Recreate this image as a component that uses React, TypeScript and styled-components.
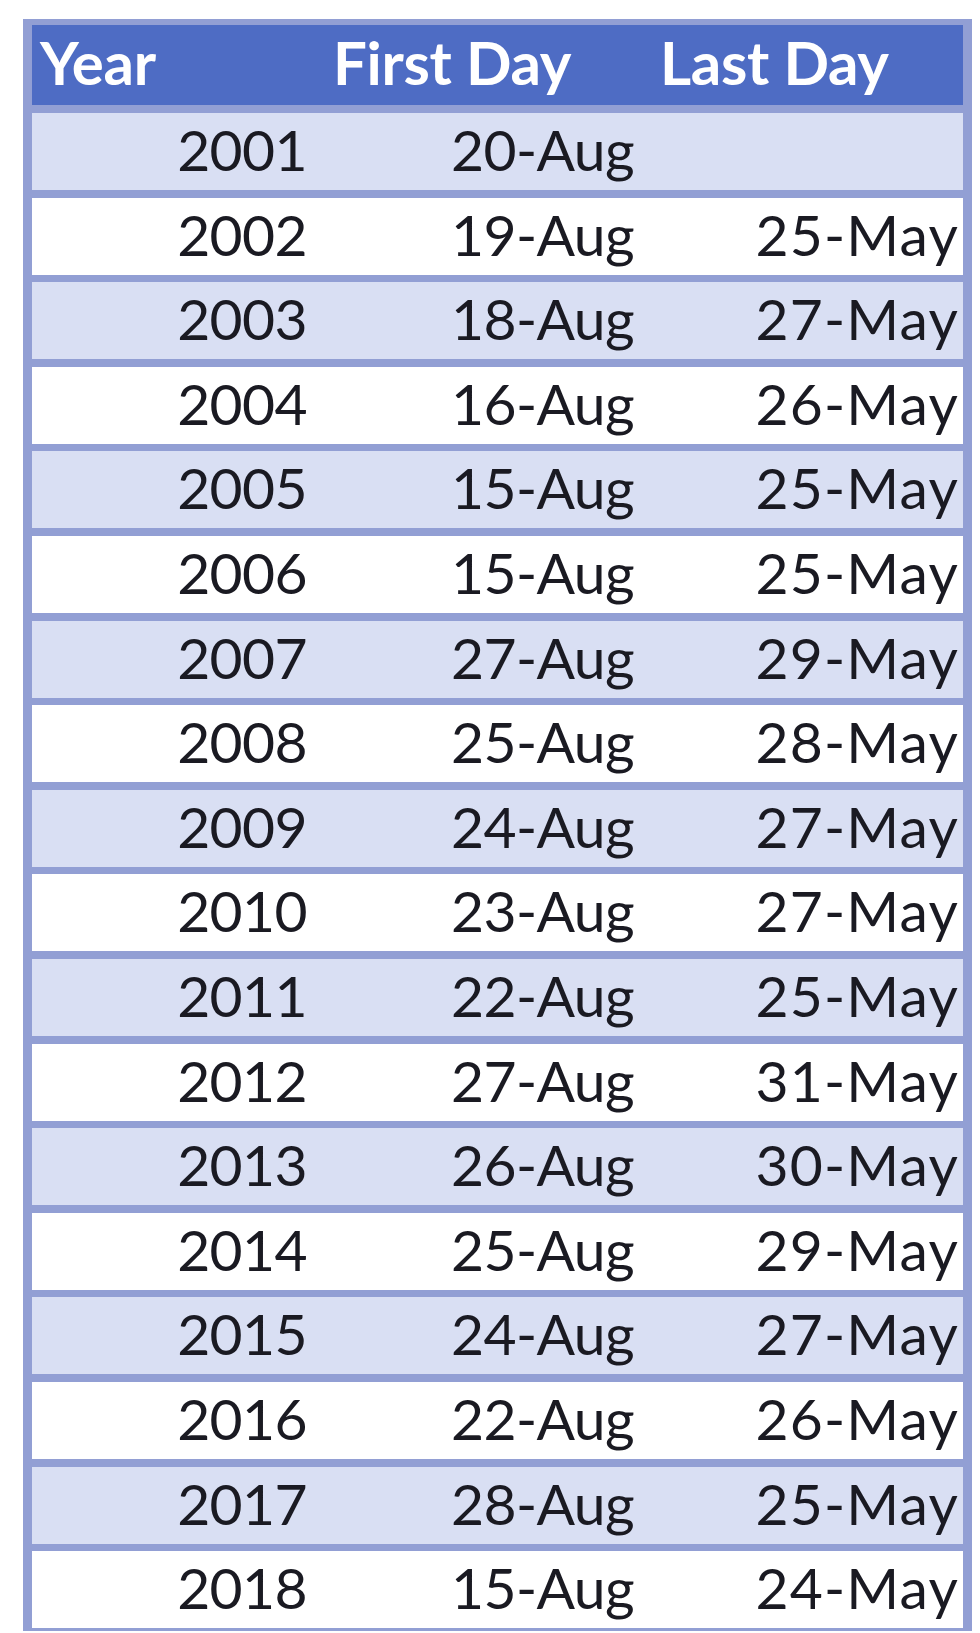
import React from 'react';
import styled, { createGlobalStyle } from 'styled-components';

const GlobalStyle = createGlobalStyle`
  html, body {
    margin: 0;
    padding: 0;
    background: #ffffff;
  }

  body {
    font-family: Lato, "Open Sans", sans-serif;
  }
`;

const Page = styled.div`
  padding: 19px 0 0 23px;
`;

const Table = styled.div`
  width: 931px;
  display: flex;
  flex-direction: column;
  background: #929fd4;
  padding: 6px 9px 3px 9px;
`;

const HeaderRow = styled.div`
  display: grid;
  grid-template-columns: 293px 327px 311px;
  height: 80px;
  background: #4e6cc4;
  margin-bottom: 8px;
`;

const HeaderCell = styled.div`
  display: flex;
  align-items: center;
  padding-left: 8px;
  padding-bottom: 6px;
  color: #ffffff;
  font-weight: 700;
  font-size: 60px;
  letter-spacing: -0.3px;
`;

const Body = styled.div`
  display: grid;
  grid-auto-rows: 77px;
  row-gap: 7.6px;
`;

const Row = styled.div<{ $band: boolean }>`
  display: grid;
  grid-template-columns: 293px 327px 311px;
  background: ${(p) => (p.$band ? '#d9dff3' : '#ffffff')};
`;

const Cell = styled.div<{ $pad: number; $spacing?: number }>`
  display: flex;
  align-items: center;
  justify-content: flex-end;
  padding-right: ${(p) => p.$pad}px;
  padding-bottom: 5px;
  color: #1a1a22;
  font-size: 57px;
  letter-spacing: ${(p) => p.$spacing ?? -0.6}px;
`;

const rows: [string, string, string][] = [
  ['2001', '20-Aug', ''],
  ['2002', '19-Aug', '25-May'],
  ['2003', '18-Aug', '27-May'],
  ['2004', '16-Aug', '26-May'],
  ['2005', '15-Aug', '25-May'],
  ['2006', '15-Aug', '25-May'],
  ['2007', '27-Aug', '29-May'],
  ['2008', '25-Aug', '28-May'],
  ['2009', '24-Aug', '27-May'],
  ['2010', '23-Aug', '27-May'],
  ['2011', '22-Aug', '25-May'],
  ['2012', '27-Aug', '31-May'],
  ['2013', '26-Aug', '30-May'],
  ['2014', '25-Aug', '29-May'],
  ['2015', '24-Aug', '27-May'],
  ['2016', '22-Aug', '26-May'],
  ['2017', '28-Aug', '25-May'],
  ['2018', '15-Aug', '24-May'],
];

export default function App() {
  return (
    <Page>
      <GlobalStyle />
      <Table>
        <HeaderRow>
          <HeaderCell>Year</HeaderCell>
          <HeaderCell>First Day</HeaderCell>
          <HeaderCell>Last Day</HeaderCell>
        </HeaderRow>
        <Body>
          {rows.map(([year, first, last], i) => (
            <Row key={year} $band={i % 2 === 0}>
              <Cell $pad={18}>{year}</Cell>
              <Cell $pad={18}>{first}</Cell>
              <Cell $pad={4} $spacing={1.2}>{last}</Cell>
            </Row>
          ))}
        </Body>
      </Table>
    </Page>
  );
}
